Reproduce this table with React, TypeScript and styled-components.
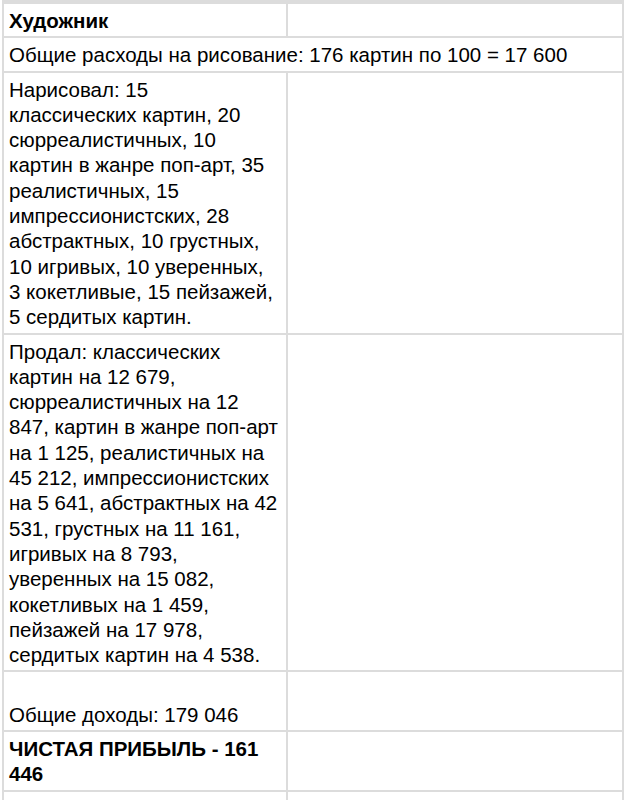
import React from 'react';
import styled, { createGlobalStyle } from 'styled-components';

const GlobalStyle = createGlobalStyle`
  body {
    margin: 0;
    background: #fff;
    font-family: 'Liberation Sans', Arial, sans-serif;
    color: #000;
  }
`;

const Sheet = styled.table`
  border-collapse: collapse;
  table-layout: fixed;
  width: 622px;
  margin-left: 2px;
  font-size: 20.5px;
  line-height: 25.3px;
`;

const Cell = styled.td<{ $bold?: boolean; $bottom?: boolean }>`
  border: 2px solid #dcdcdc;
  padding: 4px 7px 3px 5px;
  vertical-align: ${p => (p.$bottom ? 'bottom' : 'top')};
  font-weight: ${p => (p.$bold ? 'bold' : 'normal')};
  white-space: pre-wrap;
  word-wrap: break-word;
`;

const EdgeRow = styled.tr<{ $h: number }>`
  td {
    height: ${p => p.$h}px;
    padding: 0;
    border: 2px solid #dcdcdc;
  }
`;

const rows: { left: string; bold?: boolean; bottom?: boolean; span?: boolean }[] = [
  { left: 'Художник', bold: true },
  { left: 'Общие расходы на рисование: 176 картин по 100 = 17 600', span: true },
  {
    left:
      'Нарисовал: 15 классических картин, 20 сюрреалистичных, 10 картин в жанре поп-арт, 35 реалистичных, 15 импрессионистских, 28 абстрактных, 10 грустных, 10 игривых, 10 уверенных, 3 кокетливые, 15 пейзажей, 5 сердитых картин.'
  },
  {
    left:
      'Продал: классических картин на 12 679, сюрреалистичных на 12 847, картин в жанре поп-арт на 1 125, реалистичных на 45 212, импрессионистских на 5 641, абстрактных на 42 531, грустных на 11 161, игривых на 8 793, уверенных на 15 082, кокетливых на 1 459, пейзажей на 17 978, сердитых картин на 4 538.'
  },
  { left: '\nОбщие доходы: 179 046', bottom: true },
  { left: 'ЧИСТАЯ ПРИБЫЛЬ - 161 446', bold: true }
];

const App = () => (
  <>
    <GlobalStyle />
    <Sheet>
      <colgroup>
        <col style={{ width: 284 }} />
        <col />
      </colgroup>
      <tbody>
        <EdgeRow $h={0}>
          <td />
          <td />
        </EdgeRow>
        {rows.map((r, i) =>
          r.span ? (
            <tr key={i}>
              <Cell colSpan={2}>{r.left}</Cell>
            </tr>
          ) : (
            <tr key={i}>
              <Cell $bold={r.bold} $bottom={r.bottom}>
                {r.left}
              </Cell>
              <Cell />
            </tr>
          )
        )}
        <EdgeRow $h={30}>
          <td />
          <td />
        </EdgeRow>
      </tbody>
    </Sheet>
  </>
);

export default App;
